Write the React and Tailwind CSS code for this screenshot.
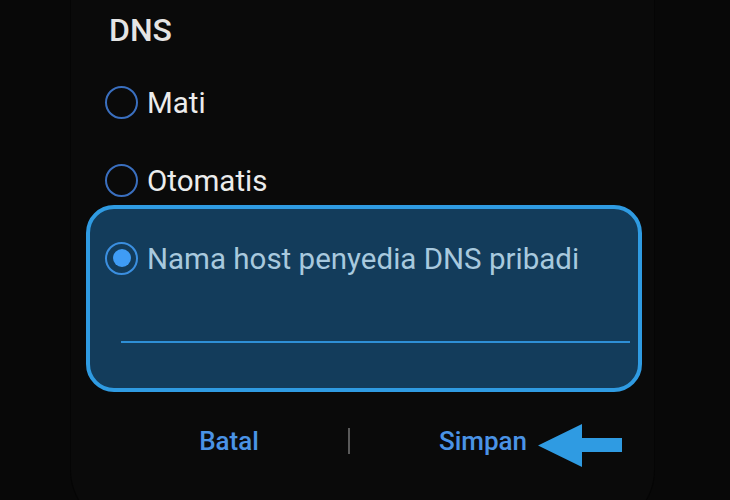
import React from "react";

function Radio({ selected }) {
  if (selected) {
    return (
      <div className="w-[33px] h-[33px] rounded-full border-2 border-[#3b8fe0] flex items-center justify-center shrink-0">
        <div className="w-[18px] h-[18px] rounded-full bg-[#3f9cf5]" />
      </div>
    );
  }
  return <div className="w-[33px] h-[33px] rounded-full border-2 border-[#3a6fbf] shrink-0" />;
}

export default function App() {
  return (
    <div
      className="w-[730px] h-[500px] overflow-hidden bg-[#080808] relative"
      style={{ fontFamily: "Roboto, 'Noto Sans', sans-serif" }}
    >
      <div className="ml-[70px] w-[585px] h-[530px] bg-[#0a0a0a] rounded-b-[60px] border-x border-b border-[#050505] flex flex-col">
        <div className="mt-[12px] ml-[38px] h-[36px] leading-[36px] text-[32px] font-medium text-[#e4e4e4]">
          DNS
        </div>
        <div className="mt-[34px] ml-[34px] h-[40px] flex items-center gap-[9px]">
          <Radio />
          <span className="text-[29.5px] leading-[40px] text-[#ececec] translate-y-[1px]">Mati</span>
        </div>
        <div className="mt-[38px] ml-[34px] h-[40px] flex items-center gap-[9px]">
          <Radio />
          <span className="text-[29.5px] leading-[40px] text-[#ececec] translate-y-[1px]">Otomatis</span>
        </div>
        <div className="mt-[5px] ml-[15px] mr-[12px] border-4 border-[#2f9be2] rounded-[28px] bg-[#133c5b] pt-[29px] pb-[45px]">
          <div className="ml-[15px] h-[40px] flex items-center gap-[9px]">
            <Radio selected />
            <span className="text-[29.5px] leading-[40px] text-[#a8c9de] translate-y-[1px]">
              Nama host penyedia DNS pribadi
            </span>
          </div>
          <div className="mt-[63px] ml-[31px] mr-[8px] h-[2px] bg-[#2e8fd6]" />
        </div>
        <div className="mt-[29px] ml-[39px] h-[40px] flex items-center">
          <div className="w-[238px] flex justify-center text-[26px] font-medium leading-[40px] text-[#4a93e6]">
            Batal
          </div>
          <div className="w-[2px] h-[26px] bg-[#5a5a5a]" />
          <div className="w-[266px] flex justify-center text-[26px] font-medium leading-[40px] text-[#4a93e6]">
            Simpan
          </div>
        </div>
      </div>
      <svg
        className="absolute left-[538px] top-[424px]"
        width="84"
        height="43"
        viewBox="0 0 84 43"
      >
        <polygon points="0,21.5 44,0 44,14 84,14 84,28 44,28 44,43" fill="#2f9be2" />
      </svg>
    </div>
  );
}
